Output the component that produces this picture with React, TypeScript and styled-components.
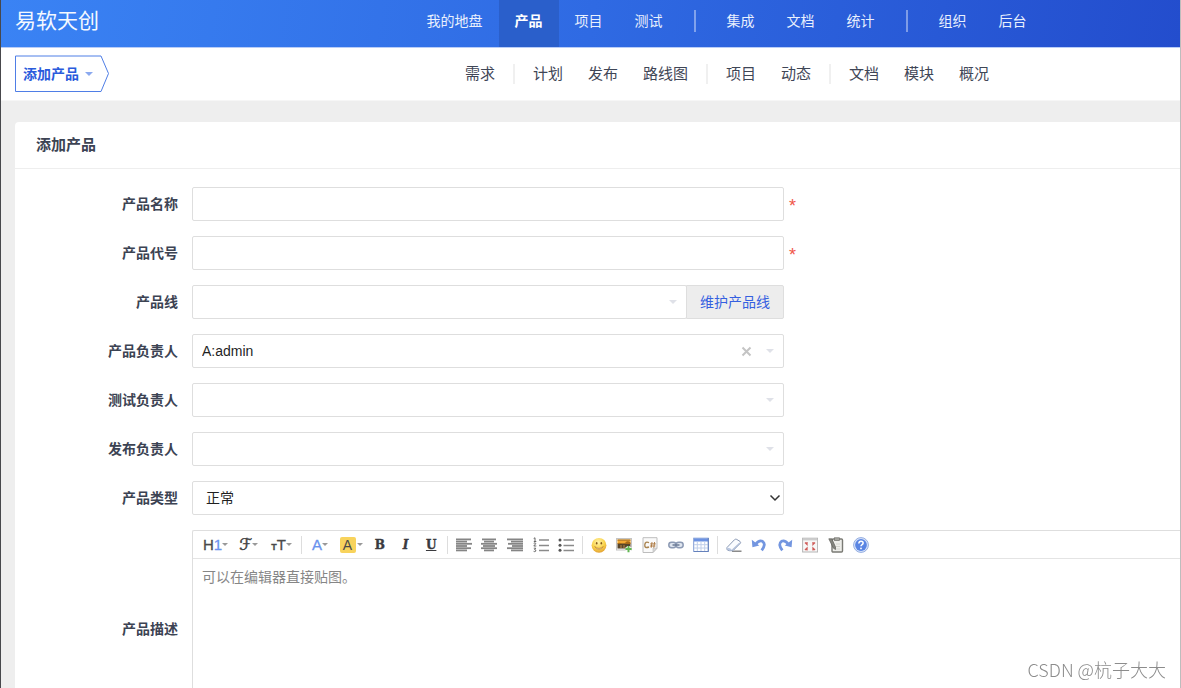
import React from "react";
import styled, { createGlobalStyle, css } from "styled-components";

const GlobalStyle = createGlobalStyle`
  *, *::before, *::after { box-sizing: border-box; }
  html { scrollbar-width: none; }
  body {
    margin: 0;
    background: #eeeeee;
    color: #3c4353;
    font-family: "Liberation Sans", "Noto Sans CJK SC", sans-serif;
    font-size: 14px;
    line-height: 20px;
  }
  button, input, select, textarea { font: inherit; color: inherit; }
`;

const Page = styled.div`
  position: relative;
  min-height: 100vh;
  overflow: hidden;
  border-left: 1px solid #47484c;
  border-right: 1px solid #bdbdbd;
`;

const navGrid = css`
  display: grid;
  grid-template-columns: 273px 1fr;
  align-items: center;
`;

const TopBar = styled.header`
  ${navGrid}
  height: 47px;
  margin-right: -1px;
  padding-right: 2px;
  background: linear-gradient(100deg, #3a83f4 0%, #2f6ae3 50%, #234dcd 100%);
  color: #f0f5ff;
`;

const Brand = styled.a`
  padding: 0 0 5px 14px;
  color: #f4f8ff;
  font-size: 21px;
  line-height: 30px;
  font-weight: 400;
  text-decoration: none;
`;

const TopNav = styled.nav`
  display: flex;
  justify-content: center;
  height: 47px;
`;

const TopLink = styled.a<{ $active?: boolean }>`
  padding: 11px 16px 0;
  color: ${(p) => (p.$active ? "#ffffff" : "#e9f0fd")};
  background: ${(p) => (p.$active ? "#2a5fcb" : "transparent")};
  font-weight: ${(p) => (p.$active ? 700 : 400)};
  text-decoration: none;
  white-space: nowrap;
`;

const TopDivider = styled.span`
  width: 2px;
  height: 22px;
  margin: 10px 15px 0;
  background: rgba(255, 255, 255, 0.4);
`;

const SubBar = styled.div`
  ${navGrid}
  height: 54px;
  background: #ffffff;
  border-top: 1px solid #b9cdf7;
  border-bottom: 1px solid #f6f6f6;
`;

const Crumb = styled.button`
  position: relative;
  display: flex;
  align-items: center;
  gap: 6px;
  width: 95px;
  height: 38px;
  margin-left: 14px;
  padding: 0 0 0 8px;
  border: 0;
  background: none;
  color: #2a5bdc;
  font-weight: 700;
  white-space: nowrap;
`;

const CrumbShape = styled.svg`
  position: absolute;
  inset: 0;
`;

const SubNav = styled.nav`
  display: flex;
  justify-content: center;
  align-items: center;
  gap: 18px;
`;

const SubGroup = styled.div`
  display: flex;
  gap: 25px;
`;

const SubLink = styled.a`
  color: #3f4656;
  font-size: 15px;
  text-decoration: none;
  white-space: nowrap;
`;

const SubDivider = styled.span`
  width: 2px;
  height: 20px;
  background: #f0f0f0;
`;

const Card = styled.main`
  margin: 21px 0 0 14px;
  background: #ffffff;
  border-radius: 4px 0 0 0;
`;

const CardTitle = styled.h1`
  height: 47px;
  margin: 0;
  padding: 13px 21px;
  border-bottom: 1px solid #eeeeee;
  font-size: 15px;
  line-height: 20px;
  font-weight: 700;
`;

const Form = styled.form`
  display: grid;
  gap: 15px;
  padding: 18px 0 20px;
`;

const Row = styled.div`
  display: grid;
  grid-template-columns: 163px 1fr;
  column-gap: 14px;
  align-items: center;
`;

const Label = styled.label`
  text-align: right;
  font-weight: 700;
`;

const Field = styled.div`
  display: flex;
  align-items: center;
  gap: 5px;
`;

const Control = styled.div`
  position: relative;
  display: flex;
  flex: 0 1 592px;
  height: 34px;
`;

const boxStyle = css`
  width: 100%;
  min-width: 0;
  height: 34px;
  border: 1px solid #dedede;
  border-radius: 2px;
  background: #ffffff;
  outline: none;
`;

const TextInput = styled.input`
  ${boxStyle}
  padding: 0 9px;
`;

const Select = styled.select<{ $indent?: boolean }>`
  ${boxStyle}
  appearance: none;
  padding: 0 ${(p) => (p.$indent ? 13 : 9)}px;
  color: #1f1f1f;
`;

const SelectBox = styled.div`
  position: relative;
  flex: 1;
`;

const Marks = styled.span`
  position: absolute;
  top: 0;
  right: 10px;
  height: 34px;
  display: flex;
  align-items: center;
  gap: 14px;
  pointer-events: none;
`;

const ChevronMark = styled(Marks)`
  right: 3px;
`;

const ClearButton = styled.button`
  display: flex;
  padding: 0;
  border: 0;
  background: none;
  pointer-events: auto;
`;

const Addon = styled.a`
  flex: none;
  margin-left: -1px;
  padding: 6px 13px;
  border: 1px solid #dedede;
  border-radius: 0 2px 2px 0;
  background: #ededed;
  color: #3560e0;
  text-decoration: none;
`;

const Required = styled.span`
  padding-top: 4px;
  color: #f0564a;
  font-size: 18px;
`;

const Editor = styled.div`
  height: 198px;
  border: 1px solid #dedede;
  border-right: 0;
  border-radius: 2px 0 0 2px;
  display: flex;
  flex-direction: column;
`;

const Toolbar = styled.div`
  display: flex;
  align-items: center;
  height: 28px;
  padding-left: 6px;
  border-bottom: 1px solid #e4e4e4;
`;

const ToolGroup = styled.div<{ $columns: string; $width: number }>`
  display: grid;
  grid-template-columns: ${(p) => p.$columns};
  width: ${(p) => p.$width}px;
`;

const Tool = styled.button`
  display: flex;
  align-items: center;
  justify-content: center;
  height: 24px;
  padding: 0;
  border: 0;
  background: none;
  color: #444444;
`;

const ToolDivider = styled.span`
  width: 1px;
  height: 18px;
  margin: 0 3px;
  background: #dddddd;
`;

const SansGlyph = styled.span<{ $size?: number; $blue?: boolean }>`
  color: ${(p) => (p.$blue ? "#6a92ee" : "#4a4a4a")};
  font-size: ${(p) => p.$size ?? 15}px;
  font-weight: ${(p) => (p.$size === 9 ? 700 : 400)};
  -webkit-text-stroke: 0.3px currentColor;
`;

const SmallT = styled(SansGlyph)`
  padding-top: 4px;
`;

const ScriptGlyph = styled.span`
  font-family: "DejaVu Sans", "DejaVu Serif", serif;
  font-size: 16px;
  -webkit-text-stroke: 0.5px currentColor;
`;

const Highlight = styled.span`
  width: 16px;
  height: 16px;
  border-radius: 2px;
  background: #f8d35c;
  color: #4a4a4a;
  font-size: 14px;
  line-height: 17px;
  margin-right: 1px;
`;

const SerifGlyph = styled.span<{ $kind: "b" | "i" | "u" }>`
  font-family: "DejaVu Serif", serif;
  font-size: 12px;
  font-weight: 700;
  color: #3a3a3e;
  -webkit-text-stroke: 0.4px currentColor;
  font-style: ${(p) => (p.$kind === "i" ? "italic" : "normal")};
  text-decoration: ${(p) => (p.$kind === "u" ? "underline" : "none")};
`;

const EditorArea = styled.textarea`
  flex: 1;
  padding: 8px 9px;
  border: 0;
  outline: 0;
  resize: none;
  background: transparent;
  &::placeholder { color: #868686; opacity: 1; }
`;

const Watermark = styled.div`
  position: fixed;
  right: 15px;
  bottom: 6px;
  color: #8c8c8c;
  font-family: "Noto Sans CJK SC", sans-serif;
  font-size: 18px;
  line-height: 26px;
  font-weight: 300;
`;

const Caret = ({ color = "#dfe1e8", w = 8 }: { color?: string; w?: number }) => (
  <svg width={w} height={w / 2} viewBox="0 0 8 4" aria-hidden="true">
    <path d="M0 0h8L4 4z" fill={color} />
  </svg>
);

const ToolCaret = () => <Caret color="#999999" w={6} />;

const Icon = ({ children }: { children: React.ReactNode }) => (
  <svg width="16" height="16" viewBox="0 0 16 16" fill="none" aria-hidden="true">
    {children}
  </svg>
);

const Lines = ({ rows }: { rows: [number, number][] }) => (
  <Icon>
    {rows.map(([x, w], i) => (
      <rect key={i} x={x} y={1.5 + i * 2.2} width={w} height="1.8" fill="#858585" />
    ))}
  </Icon>
);

const LeftIcon = () => <Lines rows={[[0, 15], [0, 11], [0, 16], [0, 11], [0, 15], [0, 11]]} />;
const CenterIcon = () => <Lines rows={[[1, 14], [3, 10], [0, 16], [2, 12], [0, 16], [3, 10]]} />;
const RightIcon = () => <Lines rows={[[0, 16], [4, 12], [1, 15], [5, 11], [0, 16], [4, 12]]} />;

const NumberedIcon = () => (
  <Icon>
    <path d="M6 3h10M6 8.500h10M6 13.500h10" stroke="#8a8a8a" strokeWidth="1.500" />
    <path d="M.7 1.500l1.300-.7v3.500M.8 4.500h2.500M.7 6.300q2-1.200 2 .4L.8 9h2.500M.8 11.200h2l-1.200 1.500q2 .2 1 1.600-.8.700-2 0" stroke="#666" />
  </Icon>
);

const BulletIcon = () => (
  <Icon>
    <path d="M5.500 3H16M5.500 8.500H16M5.500 13.500H16" stroke="#8a8a8a" strokeWidth="1.500" />
    <circle cx="2" cy="3" r="1.500" fill="#555" />
    <circle cx="2" cy="8.300" r="1.500" fill="#555" />
    <circle cx="2" cy="13.300" r="1.500" fill="#555" />
  </Icon>
);

const SmileIcon = () => (
  <Icon>
    <defs>
      <radialGradient id="face" cx=".45" cy=".3" r=".7">
        <stop offset="0" stopColor="#fff3a8" />
        <stop offset=".6" stopColor="#f9d34b" />
        <stop offset="1" stopColor="#e3a235" />
      </radialGradient>
    </defs>
    <circle cx="8" cy="8.300" r="7.400" fill="url(#face)" />
    <ellipse cx="5.700" cy="6.200" rx=".8" ry="1.200" fill="#85581c" />
    <ellipse cx="10.300" cy="6.200" rx=".8" ry="1.200" fill="#85581c" />
    <path d="M3.700 9.500q4.300 3.800 8.600 0-1.500 2.900-4.300 2.900T3.700 9.500z" fill="#fff3c8" stroke="#b5762a" strokeWidth=".6" />
  </Icon>
);

const ImageIcon = () => (
  <Icon>
    <rect x=".5" y="1.500" width="15" height="11.500" fill="#f4f4f4" stroke="#c4c4c4" />
    <rect x="1.500" y="2.500" width="13" height="4.500" fill="#f3a932" />
    <path d="M1.500 2.500h13v1.200h-13z" fill="#a9742a" />
    <rect x="1.500" y="6.500" width="13" height="5" fill="#57452a" />
    <path d="M1.500 6.500q2-1.500 4 0t4-1 5 0v1.500h-13z" fill="#a86a18" />
    <path d="M5 8v3M8 8v3" stroke="#b98a45" />
    <path d="M12.500 9v6M9.500 12h6" stroke="#ffffff" strokeWidth="3.400" />
    <path d="M12.500 9v6.200M9.400 12.100h6.200" stroke="#62b653" strokeWidth="2" />
  </Icon>
);

const CodeIcon = () => (
  <Icon>
    <path d="M1 .7h14v10.500l-4 4.300H1z" fill="#fafafa" stroke="#bdbdbd" />
    <path d="M15 11.200h-4v4.300z" fill="#d8d8d8" stroke="#bdbdbd" strokeWidth=".7" />
    <path d="M7 5.600q-3.800-1.700-4.200 2.200t4.200 2.200" stroke="#a98450" strokeWidth="1.400" />
    <path d="M10 5l-.8 5.800M12.600 5l-.8 5.800M8.200 6.900h5.600M7.900 9h5.500" stroke="#a9753c" strokeWidth=".9" />
  </Icon>
);

const LinkIcon = () => (
  <Icon>
    <rect x=".8" y="5.300" width="7.200" height="5.400" rx="2.700" fill="#dfe5ef" stroke="#8c9ab4" strokeWidth="1.500" />
    <rect x="8" y="5.300" width="7.200" height="5.400" rx="2.700" fill="#dfe5ef" stroke="#8c9ab4" strokeWidth="1.500" />
    <path d="M4.500 8h7" stroke="#6d7b96" strokeWidth="1.500" />
  </Icon>
);

const TableIcon = () => (
  <Icon>
    <rect x=".7" y="1.200" width="14.600" height="13.300" fill="#ffffff" stroke="#7f9bd4" />
    <rect x="1" y="1.500" width="14" height="3" fill="#6c92e2" />
    <path d="M1 7.700h14M1 11h14M4.300 4.500v10M8 4.500v10M11.700 4.500v10" stroke="#c0cfea" />
    <path d="M15.300 1v13.500H1" stroke="#6581bb" />
  </Icon>
);

const EraserIcon = () => (
  <Icon>
    <path d="M6 14.200h9.500" stroke="#777" strokeWidth="1.300" />
    <path d="M1 10.500L8.500 2.700q1-.9 2.200-.3l3.300 2q1.200.9.200 2L7 13.700H3q-3.200-.7-2-3.200z" fill="#fafcff" stroke="#8998b4" />
    <path d="M1.500 10.800q3.500 0 4.500 2.600H3q-2-.6-1.500-2.600z" fill="#b9c7e2" />
    <path d="M6.500 13.200l7.500-7" stroke="#b3c0d8" strokeWidth="1.600" />
  </Icon>
);

const UndoArrow = () => (
  <>
    <path d="M4.500 7.500Q8 2.700 11.500 4.300q4 2.700-.8 9" stroke="#7396e0" strokeWidth="2.800" />
    <path d="M.8 2.800l.6 7.400 6.900-1.700z" fill="#7396e0" />
  </>
);

const UndoIcon = () => (
  <Icon>
    <UndoArrow />
  </Icon>
);

const RedoIcon = () => (
  <Icon>
    <g transform="translate(16 0) scale(-1 1)">
      <UndoArrow />
    </g>
  </Icon>
);

const FullscreenIcon = () => (
  <Icon>
    <rect x=".6" y="1.200" width="15" height="13.800" fill="#f7f7f7" stroke="#b5b5b5" />
    <path d="M1 2.500h14" stroke="#cccccc" strokeWidth="1.800" />
    <path d="M3 5.500l2 2V5M3 13l2-2v2.500M13 5.500l-2 2V5M13 13l-2-2v2.500" stroke="#cf5c59" strokeWidth="1.300" />
  </Icon>
);

const SourceIcon = () => (
  <Icon>
    <rect x="4" y="2" width="10.500" height="13" rx="1" fill="#eeeeea" stroke="#7a7a74" strokeWidth="1.400" />
    <rect x="6.500" y=".8" width="5" height="2.700" fill="#a5a59f" stroke="#70706c" strokeWidth=".7" />
    <path d="M8 7h4M8 9.500h4M8 12h4" stroke="#d4d4ce" />
    <path d="M.8 1.800h3L7.500 10v2.500l-2-1.200z" fill="#85857f" stroke="#5d5d59" strokeWidth=".7" />
  </Icon>
);

const HelpIcon = () => (
  <Icon>
    <circle cx="8" cy="8" r="7.400" fill="#dbe6fb" stroke="#93acdf" />
    <circle cx="8" cy="8" r="5.900" fill="#5a85e3" />
    <path d="M5.800 6.500q.2-2.300 2.300-2.200 2.300.2 2 2-.3 1-1.300 1.500-.8.500-.8 1.500" stroke="#fff" strokeWidth="1.500" />
    <circle cx="8" cy="11.400" r=".9" fill="#fff" />
  </Icon>
);

const topGroups = [
  ["我的地盘", "产品", "项目", "测试"],
  ["集成", "文档", "统计"],
  ["组织", "后台"],
];

const subGroups = [
  ["需求"],
  ["计划", "发布", "路线图"],
  ["项目", "动态"],
  ["文档", "模块", "概况"],
];

const alignTools: [string, React.FC][] = [
  ["左对齐", LeftIcon],
  ["居中", CenterIcon],
  ["右对齐", RightIcon],
  ["编号", NumberedIcon],
  ["项目符号", BulletIcon],
];

const insertTools: [string, React.FC][] = [
  ["插入表情", SmileIcon],
  ["图片", ImageIcon],
  ["插入代码", CodeIcon],
  ["超级链接", LinkIcon],
  ["表格", TableIcon],
];

const pageTools: [string, React.FC][] = [
  ["删除格式", EraserIcon],
  ["后退", UndoIcon],
  ["前进", RedoIcon],
  ["全屏显示", FullscreenIcon],
  ["HTML代码", SourceIcon],
  ["帮助", HelpIcon],
];

const IconTools = ({ tools, width }: { tools: [string, React.FC][]; width: number }) => (
  <ToolGroup $columns={`repeat(${tools.length}, 1fr)`} $width={width}>
    {tools.map(([name, Glyph]) => (
      <Tool key={name} type="button" aria-label={name}>
        <Glyph />
      </Tool>
    ))}
  </ToolGroup>
);

const PickerRow = ({ id, label, value = "" }: { id: string; label: string; value?: string }) => (
  <Row>
    <Label htmlFor={id}>{label}</Label>
    <Field>
      <Control>
        <Select id={id} defaultValue={value}>
          <option value={value}>{value}</option>
        </Select>
        <Marks>
          {value && (
            <ClearButton type="button" aria-label="清除">
              <svg width="11" height="11" viewBox="0 0 11 11" aria-hidden="true">
                <path d="M1.500 1.500l8 8M9.500 1.500l-8 8" stroke="#c4c4c4" strokeWidth="2" />
              </svg>
            </ClearButton>
          )}
          <Caret />
        </Marks>
      </Control>
    </Field>
  </Row>
);

const TextRow = ({ id, label }: { id: string; label: string }) => (
  <Row>
    <Label htmlFor={id}>{label}</Label>
    <Field>
      <Control>
        <TextInput id={id} type="text" required />
      </Control>
      <Required>*</Required>
    </Field>
  </Row>
);

export default function App() {
  return (
    <>
      <GlobalStyle />
      <Page>
        <TopBar>
          <Brand href="#">易软天创</Brand>
          <TopNav>
            {topGroups.map((group, i) => (
              <React.Fragment key={i}>
                {i > 0 && <TopDivider />}
                {group.map((name) => (
                  <TopLink key={name} href="#" $active={name === "产品"}>
                    {name}
                  </TopLink>
                ))}
              </React.Fragment>
            ))}
          </TopNav>
        </TopBar>
        <SubBar>
          <Crumb type="button">
            <CrumbShape width="95" height="38" viewBox="0 0 95 38" fill="none" aria-hidden="true">
              <path d="M.5 1H86L93.500 18.500 86 36.500H.5z" stroke="#4f7ee6" />
            </CrumbShape>
            添加产品
            <Caret color="#8ba9ef" />
          </Crumb>
          <SubNav>
            {subGroups.map((group, i) => (
              <React.Fragment key={i}>
                {i > 0 && <SubDivider />}
                <SubGroup>
                  {group.map((name) => (
                    <SubLink key={name} href="#">
                      {name}
                    </SubLink>
                  ))}
                </SubGroup>
              </React.Fragment>
            ))}
          </SubNav>
        </SubBar>
        <Card>
          <CardTitle>添加产品</CardTitle>
          <Form>
            <TextRow id="name" label="产品名称" />
            <TextRow id="code" label="产品代号" />
            <Row>
              <Label htmlFor="line">产品线</Label>
              <Field>
                <Control>
                  <SelectBox>
                    <Select id="line" />
                    <Marks>
                      <Caret />
                    </Marks>
                  </SelectBox>
                  <Addon href="#">维护产品线</Addon>
                </Control>
              </Field>
            </Row>
            <PickerRow id="po" label="产品负责人" value="A:admin" />
            <PickerRow id="qd" label="测试负责人" />
            <PickerRow id="rd" label="发布负责人" />
            <Row>
              <Label htmlFor="type">产品类型</Label>
              <Field>
                <Control>
                  <Select id="type" $indent>
                    <option>正常</option>
                  </Select>
                  <ChevronMark>
                    <svg width="12" height="8" viewBox="0 0 12 8" fill="none" aria-hidden="true">
                      <path d="M1.500 1.500L6 6l4.500-4.500" stroke="#333" strokeWidth="1.500" />
                    </svg>
                  </ChevronMark>
                </Control>
              </Field>
            </Row>
            <Row>
              <Label htmlFor="desc">产品描述</Label>
              <Editor>
                <Toolbar>
                  <ToolGroup $columns="repeat(3, 1fr)" $width={99}>
                    <Tool type="button" aria-label="段落">
                      <SansGlyph>H</SansGlyph>
                      <SansGlyph $blue>1</SansGlyph>
                      <ToolCaret />
                    </Tool>
                    <Tool type="button" aria-label="字体">
                      <ScriptGlyph>ℱ</ScriptGlyph>
                      <ToolCaret />
                    </Tool>
                    <Tool type="button" aria-label="文字大小">
                      <SmallT $size={9}>T</SmallT>
                      <SansGlyph>T</SansGlyph>
                      <ToolCaret />
                    </Tool>
                  </ToolGroup>
                  <ToolDivider />
                  <ToolGroup $columns="30px 32px repeat(3, 1fr)" $width={139}>
                    <Tool type="button" aria-label="文字颜色">
                      <SansGlyph $blue>A</SansGlyph>
                      <ToolCaret />
                    </Tool>
                    <Tool type="button" aria-label="文字背景">
                      <Highlight>A</Highlight>
                      <ToolCaret />
                    </Tool>
                    <Tool type="button" aria-label="粗体">
                      <SerifGlyph $kind="b">B</SerifGlyph>
                    </Tool>
                    <Tool type="button" aria-label="斜体">
                      <SerifGlyph $kind="i">I</SerifGlyph>
                    </Tool>
                    <Tool type="button" aria-label="下划线">
                      <SerifGlyph $kind="u">U</SerifGlyph>
                    </Tool>
                  </ToolGroup>
                  <ToolDivider />
                  <IconTools tools={alignTools} width={128} />
                  <ToolDivider />
                  <IconTools tools={insertTools} width={128} />
                  <ToolDivider />
                  <IconTools tools={pageTools} width={153} />
                </Toolbar>
                <EditorArea id="desc" placeholder="可以在编辑器直接贴图。" />
              </Editor>
            </Row>
          </Form>
        </Card>
        <Watermark>CSDN @杭子大大</Watermark>
      </Page>
    </>
  );
}
